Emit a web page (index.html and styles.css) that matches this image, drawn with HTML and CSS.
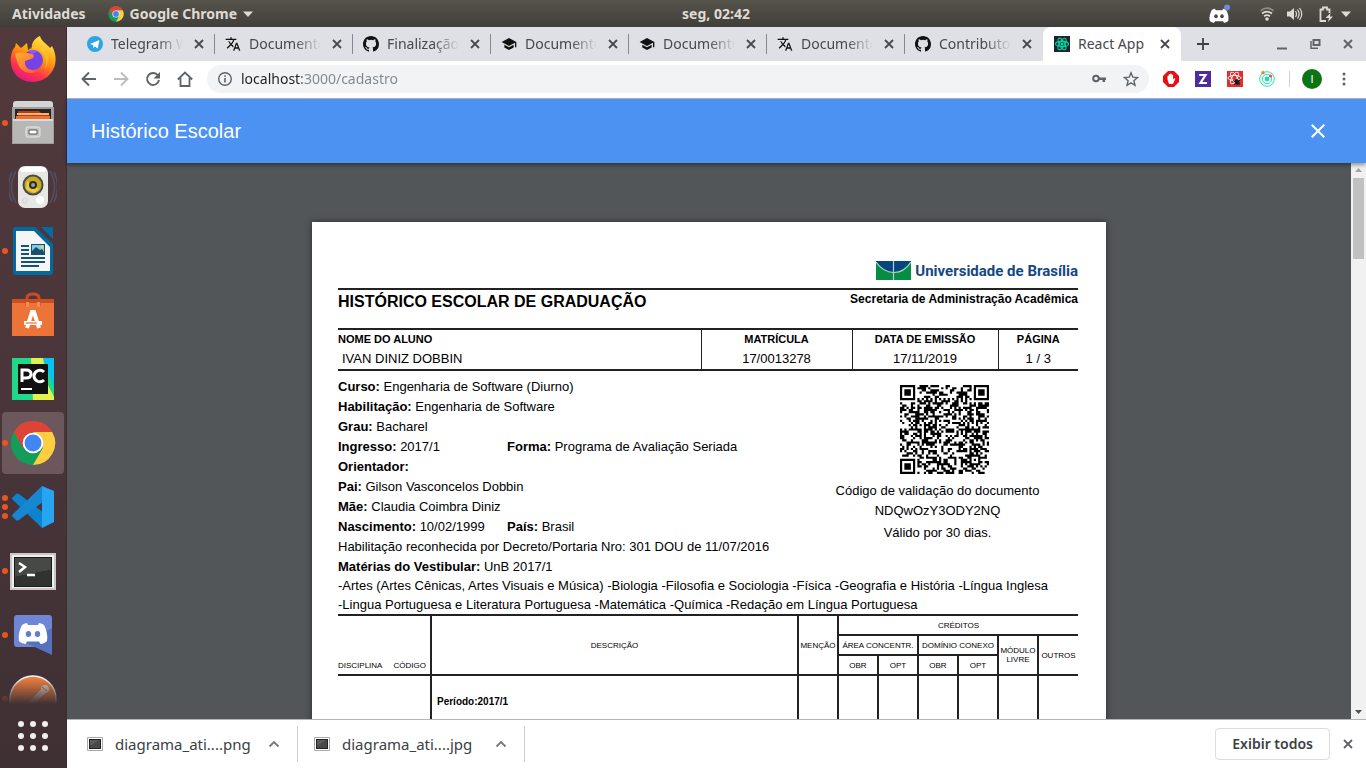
FILE: index.html
```html
<!DOCTYPE html>
<html lang="pt-BR">
<head>
<meta charset="utf-8">
<meta name="viewport" content="width=device-width, initial-scale=1">
<title>Histórico Escolar</title>
<link rel="stylesheet" href="styles.css">
</head>
<body>
<svg class="sprite" aria-hidden="true">
  <symbol id="i-close" viewBox="0 0 16 16"><path d="M4 4l8 8M12 4l-8 8" fill="none" stroke="currentColor" stroke-width="1.800"/></symbol>
  <symbol id="i-caret" viewBox="0 0 16 16"><path d="M3 5.500h10L8 11z" fill="currentColor"/></symbol>
  <symbol id="i-chrome" viewBox="0 0 48 48">
    <circle cx="24" cy="24" r="23" fill="#139d58"/>
    <path d="M4.100 12.500A23 23 0 0 1 44 12.500H24L14 29.700z" fill="#db4437"/>
    <path d="M44 12.500A23 23 0 0 1 24 47L34 29.700 33 12.500z" fill="#ffcd40"/>
    <path d="M24 12.500h20L34 24z" fill="#ffcd40"/>
    <path d="M4.100 12.500A23 23 0 0 1 44 12.500H24z" fill="#db4437"/>
    <circle cx="24" cy="24" r="10.800" fill="#fff"/><circle cx="24" cy="24" r="8.800" fill="#4285f4"/>
  </symbol>
  <symbol id="i-translate" viewBox="0 0 24 24"><path fill="currentColor" d="M12.870 15.070l-2.540-2.510.030-.030c1.740-1.940 2.980-4.170 3.710-6.530H17V4h-7V2H8v2H1v1.990h11.170C11.500 7.920 10.440 9.750 9 11.350 8.070 10.320 7.300 9.190 6.690 8h-2c.730 1.630 1.730 3.170 2.980 4.560l-5.090 5.020L4 19l5-5 3.110 3.110.760-2.040zM18.500 10h-2L12 22h2l1.120-3h4.750L21 22h2l-4.500-12zm-2.620 7l1.620-4.330L19.120 17h-3.240z"/></symbol>
  <symbol id="i-github" viewBox="0 0 16 16"><path fill="#111" d="M8 0C3.580 0 0 3.580 0 8c0 3.540 2.290 6.530 5.470 7.590.4.070.55-.17.55-.38v-1.490c-2.010.37-2.530-.49-2.690-.94-.09-.23-.48-.94-.82-1.130-.28-.15-.68-.52-.01-.53.630-.01 1.080.58 1.230.82.720 1.210 1.870.870 2.330.660.070-.52.280-.87.510-1.070-1.780-.2-3.640-.89-3.640-3.950 0-.87.310-1.590.820-2.150-.08-.2-.36-1.020.080-2.120 0 0 .67-.21 2.200.820a7.600 7.600 0 0 1 4 0c1.530-1.040 2.200-.82 2.200-.82.440 1.100.160 1.920.080 2.120.510.560.820 1.270.820 2.150 0 3.070-1.870 3.750-3.650 3.950.290.250.540.730.540 1.480v2.200c0 .21.150.46.550.38A8 8 0 0 0 16 8c0-4.420-3.580-8-8-8z"/></symbol>
  <symbol id="i-school" viewBox="0 0 24 24"><path fill="currentColor" d="M5 13.180v4L12 21l7-3.820v-4L12 17l-7-3.820zM12 3L1 9l11 6 9-4.910V17h2V9L12 3z"/></symbol>
  <symbol id="i-discord" viewBox="0 0 30 24"><path d="M9 2c-3 .5-5 2-5 2C1.500 9 0 14 1 20c3 3 6.500 3 6.500 3L9 20.500h12l1.500 2.500s3.500 0 6.500-3c1-6-.5-11-3-16 0 0-2-1.500-5-2l-1 2H10z" fill="currentColor"/><ellipse cx="10.500" cy="13" rx="2.700" ry="3" fill="var(--eye)"/><ellipse cx="19.500" cy="13" rx="2.700" ry="3" fill="var(--eye)"/></symbol>
  <symbol id="i-thumb" viewBox="0 0 16 14"><path d="M.5.5h15v13H.5z" fill="#fff" stroke="#aaa"/><path d="M2 2h12v10H2z" fill="#222"/><path d="M3 3h10v8H3z" fill="#484848"/><path d="M3 3h9L3 9z" fill="#5c5c5c"/></symbol>
  <symbol id="i-up" viewBox="0 0 16 16"><path d="M3.500 10.500L8 6l4.500 4.500" fill="none" stroke="currentColor" stroke-width="1.800"/></symbol>
</svg>

<header class="topbar">
  <div class="topbar-side">
    <button class="top-btn">Atividades</button>
    <button class="top-btn app-menu"><svg class="s16"><use href="#i-chrome"/></svg>Google Chrome<svg class="s16 caret"><use href="#i-caret"/></svg></button>
  </div>
  <button class="top-btn clock">seg, 02:42</button>
  <div class="topbar-side tray">
    <svg class="tray-discord" viewBox="0 0 24 20"><g style="--eye:#4a4842"><use href="#i-discord" x="1" y="3" width="20" height="17" color="#fff"/></g><circle cx="19" cy="3.500" r="3" fill="#7289da"/></svg>
    <svg class="s16" viewBox="0 0 16 16" fill="none" stroke-width="1.700"><g stroke="#8f8c84"><path d="M1.500 4.800Q8-.4 14.500 4.800"/></g><g stroke="#dfdbd2"><path d="M3 7.500q5-3.600 10 0M5 10.200q3-2 6 0"/></g><circle cx="8" cy="13" r="1.800" fill="#dfdbd2"/></svg>
    <svg class="s16 volume" viewBox="0 0 16 16"><path d="M0 5.500h3L7 2v12l-4-3.500H0z" fill="#dfdbd2"/><path d="M8.500 5q2 3 0 6M10.500 3.500q3.200 4.500 0 9M12.500 2q4.500 6 0 12" fill="none" stroke="#dfdbd2" stroke-width="1.200"/></svg>
    <svg class="s16 battery" viewBox="0 0 16 16"><path d="M8 15H2.500V3.500H5v-2h4v2h2.500V7" fill="none" stroke="#dfdbd2" stroke-width="1.800"/><path d="M12.500 7L7.500 12H11l-1 4 5-5.500h-3z" fill="#dfdbd2"/></svg>
    <svg class="s16"><use href="#i-caret"/></svg>
  </div>
</header>

<div class="desktop">
  <nav class="dock" aria-label="Dock">
    <ul class="dock-list">
      <li class="dock-item"><svg viewBox="0 0 48 48"><defs><linearGradient id="ff" x1=".8" y1="0" x2=".3" y2="1"><stop offset="0" stop-color="#fff44f"/><stop offset=".45" stop-color="#ff980e"/><stop offset=".75" stop-color="#ff3647"/><stop offset="1" stop-color="#e31587"/></linearGradient><linearGradient id="ffl" x1="0" y1="0" x2="1" y2="1"><stop offset="0" stop-color="#ffb02e"/><stop offset="1" stop-color="#ff5a36"/></linearGradient></defs><path d="M31 1c1 5 7 8 10 12l2-2c5 9 5 19-1 27-8 11-26 12-35 2C-1 31 1 17 6 12l1-4 5 5c3-2 4-4 6-5l1 7 4-2C22 8 26 3 31 1z" fill="url(#ff)"/><circle cx="24" cy="25" r="10" fill="#7542e5"/><path d="M19 14c12-4 22 6 17 20 6-9 2-21-8-24z" fill="#ffc52e" opacity=".8"/><path d="M6 19c5-3 12-1 17 0 3 1 2 4-1 5l-6 2c-1 7 5 11 13 9-8 7-19 1-21-9z" fill="url(#ffl)"/><path d="M20 16q4-2 8 0-2 3-6 3z" fill="#9059ff"/></svg></li>
      <li class="dock-item running"><svg viewBox="0 0 48 48"><path d="M4 5q0-3 3-3h34q3 0 3 3v8H4z" fill="#d5d5d5"/><path d="M3 8h42v37H3z" fill="#9f9f9f"/><path d="M6 10h36v10H6z" fill="#292522"/><path d="M9 12h21l2 2h8v6H9z" fill="#bd3a0f"/><path d="M8 14h32v2H8z" fill="#f5b575"/><path d="M7 17h34v3H7z" fill="#eb7233"/><path d="M4 20h40v24H4z" fill="#b7b7b5"/><path d="M4 20h40v2H4z" fill="#d9d9d9"/><rect x="17" y="28" width="14" height="10" rx="1.500" fill="#c4c4c4" stroke="#e7e7e7"/><path d="M20 31h8v4h-8z" fill="#fff" stroke="#555"/></svg></li>
      <li class="dock-item"><svg viewBox="0 0 48 48"><g fill="none" stroke="#576f98" stroke-width="1.500" opacity=".45"><path d="M7 8Q-2 24 7 40M3 9q-7 15 0 30M41 8q9 16 0 32M45 9q7 15 0 30"/></g><rect x="9" y="3" width="30" height="42" rx="7" fill="#e6e6e3"/><rect x="11" y="4" width="26" height="5" rx="3" fill="#fff"/><circle cx="24" cy="22" r="10.500" fill="#494b48"/><circle cx="24" cy="22" r="8.500" fill="#c7aa23"/><path d="M18 18l12 8-5 4-8-4z" fill="#eacb48"/><circle cx="24" cy="22" r="4" fill="#28311c"/><circle cx="24" cy="22" r="2" fill="#9a9d91"/><circle cx="31" cy="37" r="4" fill="#fff"/><rect x="14" y="35" width="4" height="5" rx="2" fill="none" stroke="#d0d0cf"/></svg></li>
      <li class="dock-item running"><svg viewBox="0 0 48 48"><path d="M7 0h19l18 17v28q0 3-3 3H7q-3 0-3-3V3q0-3 3-3z" fill="#0369a3"/><path d="M32 0h12v12z" fill="#006ba5"/><path d="M7 4h18l16 16v24H7z" fill="#f5f5f3"/><g fill="#145278"><path d="M12 18h8v2h-8zM12 22h8v2h-8zM12 26h8v2h-8zM12 30h24v2H12zM12 34h24v2H12zM12 38h18v2H12z"/><path d="M22 17h14v11H22z"/></g><path d="M23 18h12v9H23z" fill="#85c8e8"/><path d="M23 27v-3l4-4 4 3 2-1 2 3v2z" fill="#175068"/><circle cx="33" cy="20" r="1.500" fill="#ffce3a"/></svg></li>
      <li class="dock-item"><svg viewBox="0 0 48 48"><path d="M3 8h42v37H3z" fill="#e96b33"/><path d="M3 8h42v5H3z" fill="#c84f22"/><path d="M3 12h42v33H3z" fill="#ed7438"/><path d="M18 15V7q0-4 6-4t6 4v8" fill="none" stroke="#c94b25" stroke-width="3"/><path d="M17 11h3v5h-3zM28 11h3v5h-3z" fill="#f18c58"/><path d="M18 37l5-16h2l5 16" fill="none" stroke="#fff" stroke-width="4"/><path d="M15 30h18v4H15z" fill="#fff"/><path d="M17 32h11" stroke="#e95420"/></svg></li>
      <li class="dock-item"><svg viewBox="0 0 48 48"><path d="M3 3h42v42H3z" fill="#21d789"/><path d="M22 3h12l4 25 7 14v3H24z" fill="#dff34c"/><path d="M34 3h11v30z" fill="#07c3f2"/><path d="M9 9h30v30H9z" fill="#101010"/><g fill="none" stroke="#fff" stroke-width="3"><path d="M13 27V15h4q5 0 5 4t-5 4h-4M35 17q-3-3-7-1-3 2-3 5t3 5q4 2 7-1"/><path d="M12 34h11" stroke-width="2"/></g></svg></li>
      <li class="dock-item running active"><svg><use href="#i-chrome"/></svg></li>
      <li class="dock-item running triple"><svg viewBox="0 0 48 48"><path d="M33 45L4 17q-2-2 0-3l3-3q1-1 3 0l25 19z" fill="#0c83cc"/><path d="M33 3L4 31q-2 2 0 3l3 3q1 1 3 0l25-19z" fill="#1687d0"/><path d="M33 3l12 5v31l-12 6z" fill="#27a5f2"/></svg></li>
      <li class="dock-item running"><svg viewBox="0 0 48 48"><path d="M1 6h46v37H1z" fill="#c8c8c8"/><path d="M3 8h42v33H3z" fill="#efefef"/><path d="M5 10h38v30H5z" fill="#191a19"/><path d="M6 11h36v12L6 30z" fill="#464946"/><path d="M6 30l36-7v16H6z" fill="#303330"/><path d="M10 16l6 4-6 5M18 28h8" fill="none" stroke="#fff" stroke-width="2.500"/></svg></li>
      <li class="dock-item running"><svg viewBox="0 0 48 48"><path d="M8 4h32q3 0 3 3v37l-9-8H8q-3 0-3-3V7q0-3 3-3z" fill="#6f86d4"/><path d="M43 17v27L17 32z" fill="#5671bd"/><g style="--eye:#657cc7"><use href="#i-discord" x="9" y="10" width="30" height="24" color="#fff"/></g></svg></li>
      <li class="dock-item running"><svg viewBox="0 0 48 48"><circle cx="24" cy="24" r="23" fill="#f98640" stroke="#fff" stroke-width="1.500"/><path d="M17 31l15-16 4 3-15 14zM19 27l-7 8" fill="#e8d6c9" stroke="#f6e7da"/><circle cx="36" cy="14" r="4" fill="#f3ddcd"/><path d="M33 12l5 4" stroke="#cf713b"/></svg></li>
    </ul>
    <button class="apps-btn" aria-label="Mostrar aplicativos"><svg viewBox="0 0 32 32" fill="#f2f0ec"><circle cx="4" cy="4" r="3"/><circle cx="16" cy="4" r="3"/><circle cx="28" cy="4" r="3"/><circle cx="4" cy="16" r="3"/><circle cx="16" cy="16" r="3"/><circle cx="28" cy="16" r="3"/><circle cx="4" cy="28" r="3"/><circle cx="16" cy="28" r="3"/><circle cx="28" cy="28" r="3"/></svg></button>
  </nav>

  <div class="browser">
    <div class="tabstrip">
      <div class="tab"><svg class="s16" viewBox="0 0 16 16"><circle cx="8" cy="8" r="8" fill="#2ca5e0"/><path d="M3 8l9.500-4-1.800 8.500-2.800-2-1.500 1.400-.3-2.800z" fill="#fff"/></svg><span class="tab-title">Telegram Web</span><button class="tab-x" aria-label="Fechar"><svg class="s16"><use href="#i-close"/></svg></button></div>
      <div class="tab"><svg class="s16"><use href="#i-translate"/></svg><span class="tab-title">Documentos</span><button class="tab-x" aria-label="Fechar"><svg class="s16"><use href="#i-close"/></svg></button></div>
      <div class="tab"><svg class="s16"><use href="#i-github"/></svg><span class="tab-title">Finalização</span><button class="tab-x" aria-label="Fechar"><svg class="s16"><use href="#i-close"/></svg></button></div>
      <div class="tab"><svg class="s16"><use href="#i-school"/></svg><span class="tab-title">Documentos</span><button class="tab-x" aria-label="Fechar"><svg class="s16"><use href="#i-close"/></svg></button></div>
      <div class="tab"><svg class="s16"><use href="#i-school"/></svg><span class="tab-title">Documentos</span><button class="tab-x" aria-label="Fechar"><svg class="s16"><use href="#i-close"/></svg></button></div>
      <div class="tab"><svg class="s16"><use href="#i-translate"/></svg><span class="tab-title">Documentos</span><button class="tab-x" aria-label="Fechar"><svg class="s16"><use href="#i-close"/></svg></button></div>
      <div class="tab no-sep"><svg class="s16"><use href="#i-github"/></svg><span class="tab-title">Contributors</span><button class="tab-x" aria-label="Fechar"><svg class="s16"><use href="#i-close"/></svg></button></div>
      <div class="tab current"><svg class="s16" viewBox="0 0 16 16"><path d="M0 0h16v16H0z" fill="#20232f"/><g fill="none" stroke="#00d8a0" stroke-width="1.100"><ellipse cx="8" cy="8" rx="6.500" ry="2.600"/><ellipse cx="8" cy="8" rx="6.500" ry="2.600" transform="rotate(60 8 8)"/><ellipse cx="8" cy="8" rx="6.500" ry="2.600" transform="rotate(120 8 8)"/></g><circle cx="8" cy="8" r="1.500" fill="#00d8a0"/></svg><span class="tab-title">React App</span><button class="tab-x" aria-label="Fechar"><svg class="s16"><use href="#i-close"/></svg></button></div>
      <button class="new-tab" aria-label="Nova guia"><svg class="s16" viewBox="0 0 16 16"><path d="M8 2v12M2 8h12" stroke="#3c4043" stroke-width="1.800"/></svg></button>
      <div class="win-controls">
        <button aria-label="Minimizar"><svg class="s16" viewBox="0 0 16 16"><path d="M3 12.500h10" stroke="#5f6368" stroke-width="2"/></svg></button>
        <button aria-label="Restaurar"><svg class="s16" viewBox="0 0 16 16" fill="none" stroke="#5f6368"><path d="M6.500 4h6v5h-6z" stroke-width="2"/><path d="M4 5v7.200h7" stroke-width="1.500"/></svg></button>
        <button aria-label="Fechar janela"><svg class="s16" viewBox="0 0 16 16"><path d="M4 4l8 8M12 4l-8 8" stroke="#5f6368" stroke-width="2"/></svg></button>
      </div>
    </div>

    <div class="toolbar">
      <div class="nav-btns">
        <button aria-label="Voltar"><svg class="s16" viewBox="0 0 16 16"><path d="M15 8H2M8 1.500L1.500 8 8 14.500" fill="none" stroke="#5f6368" stroke-width="1.900"/></svg></button>
        <button aria-label="Avançar"><svg class="s16" viewBox="0 0 16 16"><path d="M1 8h13M8 1.500L14.500 8 8 14.500" fill="none" stroke="#babcbe" stroke-width="1.900"/></svg></button>
        <button aria-label="Recarregar"><svg class="s16" viewBox="0 0 16 16"><path d="M13 4.500A6 6 0 1 0 14 9" fill="none" stroke="#5f6368" stroke-width="1.900"/><path d="M15 1v6.500H8.500z" fill="#5f6368"/></svg></button>
        <button aria-label="Página inicial"><svg class="s16" viewBox="0 0 16 16"><path d="M.8 8.500L8 1.500l7.200 7M3.500 7v8h9V7" fill="none" stroke="#5f6368" stroke-width="1.800"/></svg></button>
      </div>
      <div class="omnibox">
        <svg class="s16" viewBox="0 0 16 16"><circle cx="8" cy="8" r="6.300" fill="none" stroke="#5f6368" stroke-width="1.400"/><path d="M8 7v4.500M8 4.200v1.600" stroke="#5f6368" stroke-width="1.600"/></svg>
        <input class="url" type="text" aria-label="Endereço" value="localhost:3000/cadastro">
        <button aria-label="Senhas"><svg class="s16" viewBox="0 0 16 16"><circle cx="5" cy="7.500" r="2.800" fill="none" stroke="#5f6368" stroke-width="2"/><path d="M7 6.500h8V9h-1v2h-2.500V9H7z" fill="#5f6368"/></svg></button>
        <button aria-label="Favoritar"><svg class="s16" viewBox="0 0 16 16"><path d="M8 1.800l1.800 4.400 4.700.4-3.600 3.100 1.100 4.600L8 11.800l-4 2.500 1.100-4.600-3.600-3.100 4.700-.4z" fill="none" stroke="#5f6368" stroke-width="1.400"/></svg></button>
      </div>
      <div class="extensions">
        <button aria-label="Bloqueador"><svg class="s16" viewBox="0 0 16 16"><path d="M5 0h6l5 5v6l-5 5H5l-5-5V5z" fill="#e90c10"/><path d="M4.500 8.500V5q.7-1 1.300 0v2V3.500q.8-1 1.400 0V7 3q.8-1 1.500 0v4-3q.8-.9 1.400 0v4.500l1.200-1.200q1.200-.3.900.8L10 13H6z" fill="#fff"/></svg></button>
        <button aria-label="Extensão Z"><svg class="s16" viewBox="0 0 16 16"><path d="M0 0h16v16H0z" fill="#4c2c9e"/><path d="M4.200 4h6.300L5.500 12h6.500" fill="none" stroke="#fff" stroke-width="2.200"/></svg></button>
        <button aria-label="React DevTools"><svg class="s16" viewBox="0 0 16 16"><path d="M0 0h16v16H0z" fill="#e32d2d"/><g fill="none" stroke="#fff" stroke-width=".9"><ellipse cx="7.500" cy="7" rx="6.500" ry="2.600"/><ellipse cx="7.500" cy="7" rx="6.500" ry="2.600" transform="rotate(60 7.500 7)"/><ellipse cx="7.500" cy="7" rx="6.500" ry="2.600" transform="rotate(120 7.500 7)"/></g><path d="M6 9.500l7 4M13.500 8.500L7 14" stroke="#111"/><ellipse cx="10" cy="11" rx="2.300" ry="3" fill="#171717" transform="rotate(-30 10 11)"/></svg></button>
        <button aria-label="Extensão radar"><svg class="s16" viewBox="0 0 16 16"><circle cx="8" cy="8" r="7.300" fill="none" stroke="#28e0b0"/><circle cx="8" cy="8" r="4.700" fill="none" stroke="#28e0b0"/><circle cx="8" cy="8" r="2.400" fill="#19ddb0"/><circle cx="4" cy="1.800" r="1.700" fill="#ff7a1a"/><circle cx="11.500" cy="5" r="1.500" fill="#fb4138"/></svg></button>
      </div>
      <button class="avatar" aria-label="Perfil">I</button>
      <button class="menu" aria-label="Menu"><svg class="s16" viewBox="0 0 16 16" fill="#5f6368"><circle cx="8" cy="3" r="1.500"/><circle cx="8" cy="8" r="1.500"/><circle cx="8" cy="13" r="1.500"/></svg></button>
    </div>

    <header class="appbar">
      <h1 class="appbar-title">Histórico Escolar</h1>
      <button class="appbar-close" aria-label="Fechar"><svg viewBox="0 0 24 24"><path fill="#fff" d="M19 6.410L17.590 5 12 10.590 6.410 5 5 6.410 10.590 12 5 17.590 6.410 19 12 13.410 17.590 19 19 17.590 13.410 12z"/></svg></button>
    </header>

    <main class="viewer">
      <div class="pages">
        <article class="sheet">
          <div class="uni"><svg viewBox="0 0 35 19"><path d="M0 0h35v19H0z" fill="#078d43"/><path d="M0 0h35q-7 10-17.500 11T0 0z" fill="#064580"/><path d="M0 1q7 10 17.500 10.500T35 1M17.500 0v19" fill="none" stroke="#b3d0ce" stroke-width="1.200"/></svg><span>Universidade de Brasília</span></div>
          <div class="doc-head"><h2>HISTÓRICO ESCOLAR DE GRADUAÇÃO</h2><p>Secretaria de Administração Acadêmica</p></div>
          <table class="student">
            <colgroup><col class="c-name"><col class="c-mat"><col class="c-date"><col class="c-page"></colgroup>
            <thead><tr><th>NOME DO ALUNO</th><th>MATRÍCULA</th><th>DATA DE EMISSÃO</th><th>PÁGINA</th></tr></thead>
            <tbody><tr><td>IVAN DINIZ DOBBIN</td><td>17/0013278</td><td>17/11/2019</td><td>1 / 3</td></tr></tbody>
          </table>
          <section class="info">
            <div class="facts">
              <p><b>Curso:</b> Engenharia de Software (Diurno)</p>
              <p><b>Habilitação:</b> Engenharia de Software</p>
              <p><b>Grau:</b> Bacharel</p>
              <p class="pair"><span><b>Ingresso:</b> 2017/1</span><span><b>Forma:</b> Programa de Avaliação Seriada</span></p>
              <p><b>Orientador:</b></p>
              <p><b>Pai:</b> Gilson Vasconcelos Dobbin</p>
              <p><b>Mãe:</b> Claudia Coimbra Diniz</p>
              <p class="pair"><span><b>Nascimento:</b> 10/02/1999</span><span><b>País:</b> Brasil</span></p>
              <p>Habilitação reconhecida por Decreto/Portaria Nro: 301 DOU de 11/07/2016</p>
            </div>
            <div class="validation">
              <svg class="qr" viewBox="0 0 41 41" role="img" aria-label="QR Code"><path id="qr-path"/></svg>
              <p>Código de validação do documento</p>
              <p>NDQwOzY3ODY2NQ</p>
              <p class="valid-for">Válido por 30 dias.</p>
            </div>
          </section>
          <div class="exam">
            <p><b>Matérias do Vestibular:</b> UnB 2017/1</p>
            <p>-Artes (Artes Cênicas, Artes Visuais e Música) -Biologia -Filosofia e Sociologia -Física -Geografia e História -Língua Inglesa</p>
            <p>-Lingua Portuguesa e Literatura Portuguesa -Matemática -Química -Redação em Língua Portuguesa</p>
          </div>
          <table class="grades">
            <colgroup><col class="g-code"><col><col class="g-n"><col class="g-n"><col class="g-n"><col class="g-n"><col class="g-n"><col class="g-n"><col class="g-n"></colgroup>
            <thead>
              <tr><th rowspan="3" class="code"><span>DISCIPLINA</span><span>CÓDIGO</span></th><th rowspan="3">DESCRIÇÃO</th><th rowspan="3">MENÇÃO</th><th colspan="6">CRÉDITOS</th></tr>
              <tr><th colspan="2">ÁREA CONCENTR.</th><th colspan="2">DOMÍNIO CONEXO</th><th rowspan="2">MÓDULO<br>LIVRE</th><th rowspan="2">OUTROS</th></tr>
              <tr><th>OBR</th><th>OPT</th><th>OBR</th><th>OPT</th></tr>
            </thead>
            <tbody><tr><td></td><td>Período:2017/1</td><td></td><td></td><td></td><td></td><td></td><td></td><td></td></tr></tbody>
          </table>
        </article>
      </div>
      <div class="scrollbar" aria-hidden="true"><svg viewBox="0 0 15 15"><path d="M4 9l3.500-4L11 9z" fill="#a3a3a3"/></svg><div class="track"><div class="thumb"></div></div><svg viewBox="0 0 15 15"><path d="M4 6l3.500 4L11 6z" fill="#505050"/></svg></div>
    </main>

    <footer class="shelf">
      <button class="download"><svg class="thumb-ico"><use href="#i-thumb"/></svg><span>diagrama_ati....png</span><svg class="s16"><use href="#i-up"/></svg></button>
      <button class="download"><svg class="thumb-ico"><use href="#i-thumb"/></svg><span>diagrama_ati....jpg</span><svg class="s16"><use href="#i-up"/></svg></button>
      <button class="show-all">Exibir todos</button>
      <button class="shelf-close" aria-label="Fechar"><svg class="s16"><use href="#i-close"/></svg></button>
    </footer>
  </div>
</div>
<script src="qr.js"></script>
</body>
</html>
```
FILE: styles.css
```css
* { box-sizing: border-box; }
body {
  margin: 0;
  height: 100vh;
  display: flex;
  flex-direction: column;
  overflow: hidden;
  font: 14px/20px "Noto Sans", "Open Sans", sans-serif;
  color: #3c4043;
}
h1, h2, p, ul { margin: 0; padding: 0; }
button {
  display: flex;
  align-items: center;
  justify-content: center;
  padding: 0;
  border: 0;
  background: none;
  color: inherit;
  font: inherit;
}
svg { display: block; flex: none; }
.sprite { position: absolute; width: 0; height: 0; }
.s16 { width: 16px; height: 16px; }

/* system bar */
.topbar {
  flex: none;
  height: 27px;
  display: flex;
  align-items: center;
  padding: 0 12px;
  background: linear-gradient(#57544c, #403e39);
  color: #dfdbd2;
  font-weight: 700;
}
.topbar-side { flex: 1; display: flex; align-items: center; gap: 22px; }
.clock { margin-left: 66px; }
.app-menu { gap: 6px; }
.caret { margin-left: -3px; }
.tray { justify-content: flex-end; gap: 12px; }
.tray-discord { width: 24px; height: 20px; margin-right: 15px; }
.battery { margin-left: 3px; }
.tray > :last-child { margin-left: -8px; }

/* dock */
.desktop { flex: 1; min-height: 0; display: flex; }
.dock {
  flex: none;
  width: 67px;
  display: flex;
  flex-direction: column;
  background: linear-gradient(#52393b, #49353a 50%, #3f3033);
  border-right: 1px solid #3b2d30;
}
.dock-list {
  flex: 1;
  min-height: 0;
  overflow: hidden;
  list-style: none;
  -webkit-mask-image: linear-gradient(#000 calc(100% - 28px), transparent);
  mask-image: linear-gradient(#000 calc(100% - 28px), transparent);
}
.dock-item {
  position: relative;
  height: 62px;
  width: 62px;
  margin: 1px 2px 2px;
  display: flex;
  align-items: center;
  justify-content: center;
  border-radius: 4px;
}
.dock-item svg { width: 48px; height: 48px; }
.dock-item.active { background: #6b575c; }
.dock-item.active svg { width: 46px; height: 46px; }
.running::before {
  content: "";
  position: absolute;
  left: 0;
  top: 28px;
  width: 6px;
  height: 6px;
  border-radius: 3px;
  background: #e95420;
}
.triple::before { box-shadow: 0 -9px #e95420, 0 9px #e95420; }
.apps-btn { flex: none; height: 64px; }
.apps-btn svg { width: 32px; height: 32px; }

/* tabs */
.browser { flex: 1; min-width: 0; display: flex; flex-direction: column; background: #fff; }
.tabstrip {
  flex: none;
  height: 34px;
  display: flex;
  align-items: center;
  padding: 0 10px;
  background: #dee0e6;
}
.tab {
  flex: 0 1 138px;
  min-width: 0;
  height: 34px;
  display: flex;
  align-items: center;
  gap: 8px;
  padding: 0 8px 0 10px;
  color: #45494d;
}
.tab > .s16 { color: #111; }
.tab:not(.current, .no-sep) {
  background: linear-gradient(#85888c, #85888c) right center / 1px 20px no-repeat;
}
.tab-title {
  flex: 1;
  min-width: 0;
  overflow: hidden;
  white-space: nowrap;
  -webkit-mask-image: linear-gradient(90deg, #000 calc(100% - 26px), transparent);
  mask-image: linear-gradient(90deg, #000 calc(100% - 26px), transparent);
}
.current { background: #fff; border-radius: 8px 8px 0 0; padding-left: 11px; }
.current .tab-title { -webkit-mask: none; mask: none; }
.new-tab { width: 28px; height: 28px; margin-left: 8px; }
.win-controls { margin-left: auto; display: flex; gap: 17px; }

/* toolbar */
.toolbar {
  flex: none;
  height: 38px;
  display: flex;
  align-items: center;
  padding: 0 14px 1px;
  border-bottom: 1px solid #b6b4b6;
}
.nav-btns { display: flex; gap: 16px; margin-right: 14px; }
.omnibox {
  flex: 1;
  min-width: 0;
  height: 28px;
  display: flex;
  align-items: center;
  gap: 8px;
  padding: 0 10px;
  border-radius: 14px;
  background: #f1f3f4;
}
.omnibox button + button { margin-left: 8px; }
.url {
  flex: 1;
  min-width: 0;
  padding: 0;
  border: 0;
  outline: 0;
  font: inherit;
  background: linear-gradient(90deg, #202124 61px, #80868b 61px);
  -webkit-background-clip: text;
  background-clip: text;
  color: transparent;
}
.extensions {
  display: flex;
  gap: 16px;
  margin-left: 14px;
  padding-right: 14px;
  border-right: 1px solid #d0d2d4;
}
.avatar {
  width: 20px;
  height: 20px;
  margin: 0 14px 0 12px;
  border-radius: 10px;
  background: #0b7515;
  color: #fff;
  font: 11px/20px "Liberation Sans", Arial, sans-serif;
}

/* application */
.appbar {
  position: relative;
  z-index: 1;
  flex: none;
  height: 64px;
  display: flex;
  align-items: center;
  justify-content: space-between;
  padding: 0 36px 0 24px;
  background: #4b92f2;
  box-shadow: 0 2px 4px rgba(0, 0, 0, .4);
}
.appbar-title { font: 20px/32px "Liberation Sans", Arial, sans-serif; color: #fff; }
.appbar-close svg { width: 24px; height: 24px; }
.viewer { flex: 1; min-height: 0; display: flex; background: #525659; }
.pages { flex: 1; min-width: 0; overflow: hidden; padding-top: 59px; }
.sheet {
  width: 794px;
  min-height: 1122px;
  margin: 0 auto;
  padding: 38px 28px 38px 26px;
  background: #fff;
  box-shadow: 0 0 6px rgba(0, 0, 0, .5);
  font: 13px/20px "Liberation Sans", Arial, sans-serif;
  color: #000;
}
.scrollbar { flex: none; width: 15px; display: flex; flex-direction: column; background: #f1f1f1; }
.scrollbar svg { width: 15px; height: 15px; }
.track { flex: 1; }
.thumb { height: 81px; margin: 0 2px; background: #c1c1c1; }

/* transcript */
.uni {
  display: flex;
  justify-content: flex-end;
  align-items: center;
  gap: 4px;
  height: 21px;
  color: #134884;
  font: 700 15px/20px Roboto, sans-serif;
}
.uni svg { width: 35px; height: 19px; }
.doc-head {
  display: flex;
  justify-content: space-between;
  height: 40px;
  margin-top: 7px;
  border-top: 2px solid #222;
}
.doc-head h2 { font-size: 16px; line-height: 24px; }
.doc-head p { font-size: 12px; line-height: 19px; font-weight: 700; }
table { width: 100%; table-layout: fixed; border-collapse: collapse; }
.student { border-top: 2px solid #222; border-bottom: 2px solid #222; }
.student th { height: 19px; padding: 0; font-size: 11px; line-height: 19px; }
.student td { height: 20px; padding: 0; text-align: center; line-height: 20px; }
.student :is(th, td) + :is(th, td) { border-left: 1px solid #222; }
.student :is(th, td):first-child { text-align: left; }
.student td:first-child { padding-left: 4px; }
.c-mat { width: 151px; }
.c-date { width: 146px; }
.c-page { width: 80px; }
.info { display: flex; padding-top: 6px; }
.facts { flex: 1; min-width: 0; white-space: nowrap; }
.pair { display: grid; grid-template-columns: 169px 1fr; }
.validation { width: 281px; padding-top: 8px; text-align: center; }
.qr { width: 89px; height: 89px; margin: 0 auto 7px; transform: translateX(7px); }
.valid-for { margin-top: 2px; }
.exam { line-height: 19px; white-space: nowrap; }
.grades { border-top: 2px solid #222; font-size: 8px; }
.grades th { height: 20px; padding: 0; font-weight: 400; line-height: 9px; border: 2px solid #222; }
.grades th:first-child.code { border-left: 0; }
.grades tr > :last-child { border-right: 0; }
.grades .code { vertical-align: bottom; padding-bottom: 4px; text-align: left; }
.code span + span { margin-left: 11px; }
.grades td {
  height: 80px;
  padding: 20px 5px 0;
  vertical-align: top;
  font-size: 10px;
  line-height: 12px;
  font-weight: 700;
  border-left: 2px solid #222;
}
.grades td:first-child { border-left: 0; }
.g-code { width: 93px; }
.g-n { width: 40px; }

/* downloads */
.shelf {
  flex: none;
  height: 49px;
  display: flex;
  align-items: center;
  padding-right: 10px;
  border-top: 1px solid #b6b4b6;
  background: #fff;
}
.download {
  height: 36px;
  gap: 12px;
  padding: 0 15px 0 16px;
  border-right: 1px solid #ccc;
  font-size: 15px;
}
.download:first-child { padding-left: 20px; }
.download span { min-width: 139px; text-align: left; }
.download .s16 { color: #777; }
.thumb-ico { width: 16px; height: 14px; }
.show-all {
  height: 32px;
  margin-left: auto;
  padding: 0 16px;
  border: 1px solid #dadce0;
  border-radius: 4px;
  font-weight: 600;
}
.shelf-close { margin-left: 10px; color: #5f6368; }
```
FILE: qr.js
```js
// Draws the validation code: finder, timing and alignment patterns plus data modules.
const SIZE = 41;
const path = document.getElementById("qr-path");
let seed = 20171119;

function nextBit() {
  seed = (Math.imul(seed, 1664525) + 1013904223) >>> 0;
  return seed >>> 31;
}

function ring(dx, dy, light) {
  return Math.max(Math.abs(dx), Math.abs(dy)) !== light;
}

function isDark(x, y) {
  const bit = nextBit();
  for (const [cx, cy] of [[3, 3], [SIZE - 4, 3], [3, SIZE - 4]]) {
    const d = Math.max(Math.abs(x - cx), Math.abs(y - cy));
    if (d <= 4) return d !== 2 && d !== 4;
  }
  if (Math.abs(x - 34) <= 2 && Math.abs(y - 34) <= 2) return ring(x - 34, y - 34, 1);
  if (x === 6) return y % 2 === 0;
  if (y === 6) return x % 2 === 0;
  return bit === 1;
}

let d = "";
for (let y = 0; y < SIZE; y++) {
  for (let x = 0; x < SIZE; x++) {
    if (isDark(x, y)) d += `M${x} ${y}h1v1h-1z`;
  }
}
path.setAttribute("d", d);
```
